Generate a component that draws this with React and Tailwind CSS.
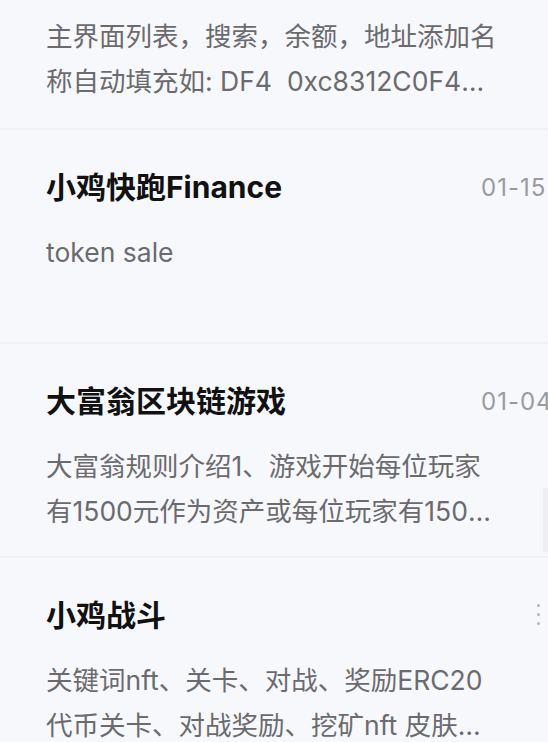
const items = [
  {
    title: "小鸡快跑Finance",
    date: "01-15",
    desc: "token sale",
  },
  {
    title: "大富翁区块链游戏",
    date: "01-04",
    desc: "大富翁规则介绍1、游戏开始每位玩家有1500元作为资产或每位玩家有1500元作为资产",
    scroll: true,
  },
  {
    title: "小鸡战斗",
    more: true,
    desc: "关键词nft、关卡、对战、奖励ERC20代币关卡、对战奖励、挖矿nft 皮肤、装备、道具",
  },
];

function Desc({ children }) {
  return (
    <p className="text-[26.5px] leading-[45px] text-[#6b6b6e] line-clamp-2 break-all pr-[50px]">
      {children}
    </p>
  );
}

function Item({ item }) {
  return (
    <div className="relative h-[214px] pl-[46px] pt-[37px] border-b-2 border-[#eef0f4]">
      <div className="flex items-center h-[40px]">
        <h3 className="flex-1 text-[30px] font-bold text-[#111] leading-[40px]">{item.title}</h3>
        {item.date && (
          <span className="w-[67px] shrink-0 overflow-hidden whitespace-nowrap text-[24px] text-[#9b9b9e] tracking-[1px] pt-[2px]">
            {item.date}
          </span>
        )}
        {item.more && (
          <span className="w-[11px] shrink-0 flex flex-col items-start gap-[6px] -mt-[2px]">
            <i className="block w-[3px] h-[3px] rounded-full bg-[#b4b4b8]" />
            <i className="block w-[3px] h-[3px] rounded-full bg-[#b4b4b8]" />
            <i className="block w-[3px] h-[3px] rounded-full bg-[#b4b4b8]" />
          </span>
        )}
      </div>
      <div className="mt-[23px]">
        <Desc>{item.desc}</Desc>
      </div>
      {item.scroll && (
        <div className="absolute right-0 top-[144px] w-[5px] h-[64px] bg-[#eeeff2]" />
      )}
    </div>
  );
}

export default function App() {
  return (
    <div
      className="w-[548px] h-[742px] overflow-hidden bg-[#f7f8fc]"
      style={{ fontFamily: 'Inter, "Noto Sans CJK SC", sans-serif' }}
    >
      <div className="h-[130px] pl-[46px] pt-[14px] border-b-2 border-[#eef0f4]">
        <Desc>主界面列表，搜索，余额，地址添加名称自动填充如: DF4{"\u00a0 "}0xc8312C0F42b6a5d0e3f1</Desc>
      </div>
      {items.map((it) => (
        <Item key={it.title} item={it} />
      ))}
    </div>
  );
}
